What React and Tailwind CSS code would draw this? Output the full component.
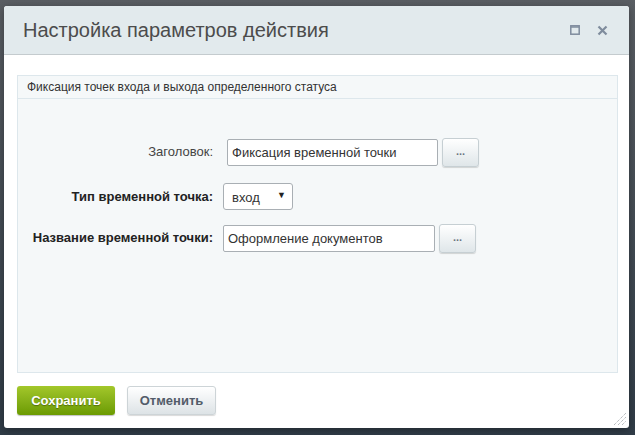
import { useState } from 'react'

const MoreButton = () => (
  <button className="h-[29px] w-[37px] rounded-[3px] border border-[#c6cfd3] bg-gradient-to-b from-white to-[#dfe6e9] shadow-[0_1px_1px_rgba(0,0,0,0.15)] text-[11px] font-bold leading-none text-[#6b7480] pb-[2px]">
    ...
  </button>
)

const ResizeGrip = () => (
  <svg width="14" height="14" viewBox="0 0 14 14" className="absolute right-[3px] bottom-[3px]">
    {[4, 8, 12].map((o) => (
      <line key={o} x1={14 - o} y1="14" x2="14" y2={14 - o} stroke="#9a9fa4" strokeWidth="1" strokeDasharray="1 1" />
    ))}
  </svg>
)

export default function App() {
  const [title, setTitle] = useState('Фиксация временной точки')
  const [kind, setKind] = useState('вход')
  const [pointName, setPointName] = useState('Оформление документов')

  return (
    <div
      className="w-[635px] h-[435px] overflow-hidden bg-gradient-to-b from-[#5a5e63] to-[#303c47] pt-[6px] pl-[4px]"
      style={{ fontFamily: '"Liberation Sans", Arial, sans-serif' }}
    >
      <div className="relative w-[625px] h-[422px] bg-white rounded-[3px] shadow-[0_2px_8px_rgba(0,0,0,0.35)] flex flex-col">
        {/* Header */}
        <div className="h-[49px] shrink-0 flex items-center justify-between pl-[19px] pr-[21px] bg-[#e2eaed] border-b border-[#c4cbce] rounded-t-[3px]">
          <span className="text-[20px] text-[#4c4c4c]">Настройка параметров действия</span>
          <div className="flex items-center gap-[17px] text-[#7f8c9d]">
            <svg width="10" height="10" viewBox="0 0 10 10">
              <rect x="0.8" y="0.8" width="8.4" height="8.4" fill="none" stroke="currentColor" strokeWidth="1.5" />
              <line x1="1" y1="2" x2="9" y2="2" stroke="currentColor" strokeWidth="1.5" />
            </svg>
            <svg width="11" height="11" viewBox="0 0 11 11">
              <path d="M1.5 1.5 L9.5 9.5 M9.5 1.5 L1.5 9.5" stroke="currentColor" strokeWidth="2.2" />
            </svg>
          </div>
        </div>

        {/* Body */}
        <div className="pt-[20px] pl-[13px] pr-[11px]">
          <div className="h-[298px] border border-[#dde7ec] bg-[#f5f8f9] flex flex-col">
            <div className="h-[23px] shrink-0 border-b border-[#dde7ec] flex items-center pl-[9px] text-[12px] text-[#333]">
              Фиксация точек входа и выхода определенного статуса
            </div>

            <div className="flex flex-col text-[13px] text-[#333]">
              {/* Заголовок */}
              <div className="mt-[38px] h-[30px] flex items-center">
                <div className="w-[195px] text-right text-[#444]">Заголовок:</div>
                <input
                  value={title}
                  onChange={(e) => setTitle(e.target.value)}
                  className="ml-[14px] w-[211px] h-[27px] px-[4px] bg-white border border-[#a9afb4] rounded-[2px] text-[13px] text-[#333] outline-none"
                />
                <div className="ml-[4px]">
                  <MoreButton />
                </div>
              </div>

              {/* Тип */}
              <div className="mt-[16px] h-[27px] flex items-center">
                <div className="w-[195px] text-right font-bold text-[#222]">Тип временной точка:</div>
                <div className="ml-[10px] relative w-[70px] h-[27px] bg-white border border-[#a9afb4] rounded-[3px] flex items-center pl-[8px]">
                  <span className="pt-[3px]">{kind}</span>
                  <span className="absolute right-[6px] top-[5px] text-[9px] text-[#222]">▼</span>
                  <select
                    value={kind}
                    onChange={(e) => setKind(e.target.value)}
                    className="absolute inset-0 opacity-0"
                  >
                    <option>вход</option>
                    <option>выход</option>
                  </select>
                </div>
              </div>

              {/* Название */}
              <div className="mt-[13px] h-[30px] flex items-center">
                <div className="w-[195px] text-right font-bold text-[#222]">Название временной точки:</div>
                <input
                  value={pointName}
                  onChange={(e) => setPointName(e.target.value)}
                  className="ml-[10px] w-[212px] h-[27px] px-[4px] bg-white border border-[#a9afb4] rounded-[2px] text-[13px] text-[#333] outline-none"
                />
                <div className="ml-[4px]">
                  <MoreButton />
                </div>
              </div>
            </div>
          </div>
        </div>

        {/* Footer */}
        <div className="flex gap-[12px] pl-[13px] pt-[13px]">
          <button className="w-[98px] h-[29px] rounded-[3px] bg-gradient-to-b from-[#a3c72a] to-[#6b9b00] shadow-[0_1px_1px_rgba(0,0,0,0.25)] text-[13px] font-bold text-white [text-shadow:0_1px_1px_rgba(0,0,0,0.35)]">
            Сохранить
          </button>
          <button className="w-[89px] h-[29px] rounded-[3px] border border-[#cdd4d7] bg-gradient-to-b from-white to-[#dde3e6] shadow-[0_1px_1px_rgba(0,0,0,0.15)] text-[13px] font-bold text-[#535c69]">
            Отменить
          </button>
        </div>

        <ResizeGrip />
      </div>
    </div>
  )
}
